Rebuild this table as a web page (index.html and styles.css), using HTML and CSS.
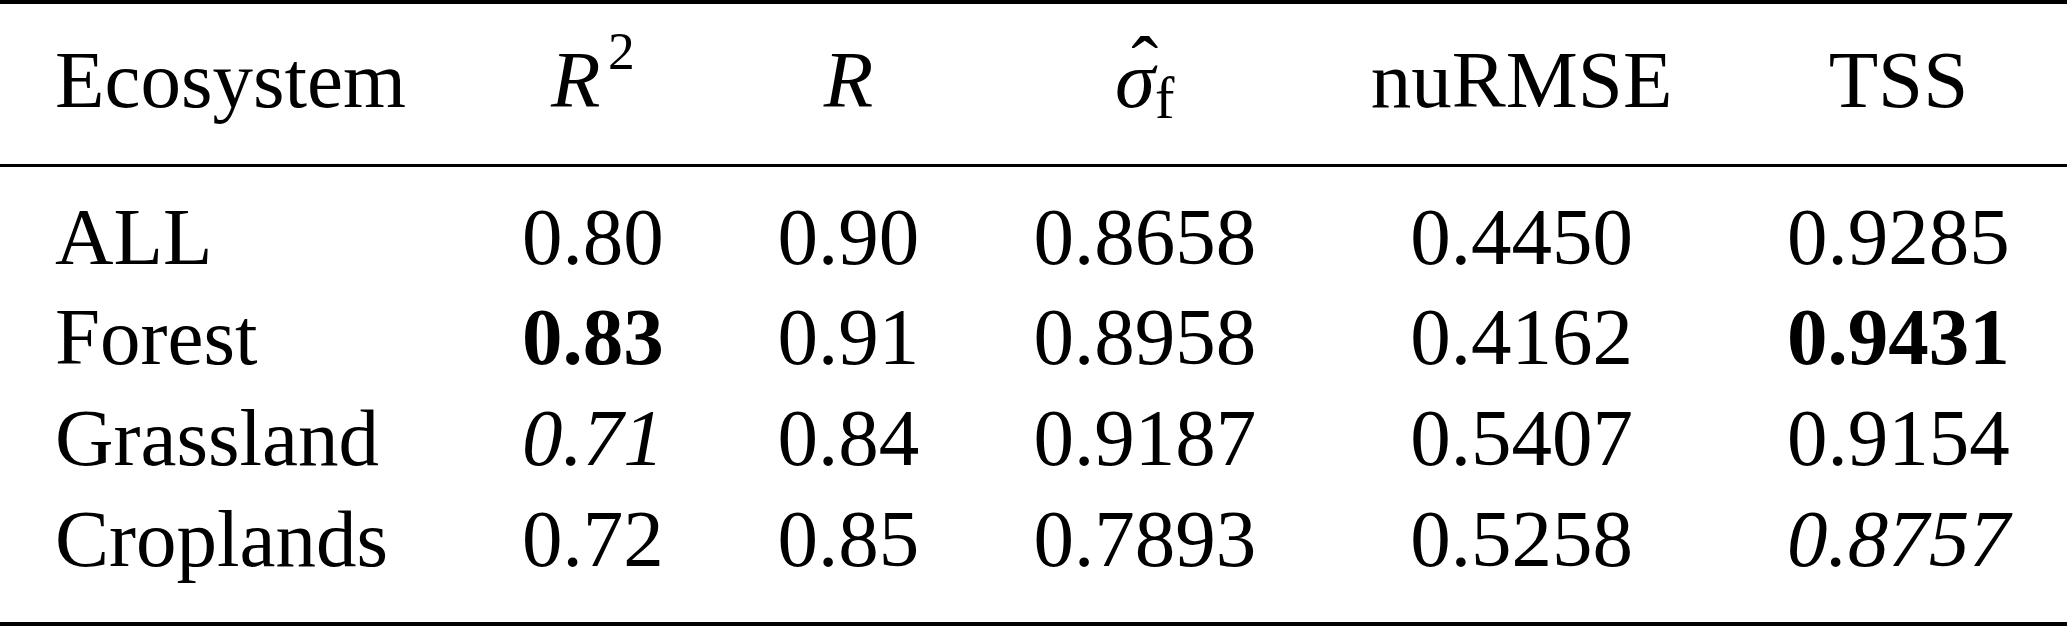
FILE: index.html
```html
<!DOCTYPE html>
<html lang="en">
<head>
    <meta charset="UTF-8">
    <meta name="viewport" content="width=device-width, initial-scale=1.0">
    <title>Ecosystem Results</title>
    <link rel="stylesheet" href="styles.css">
</head>
<body>
<!-- Results per ecosystem -->
<table class="results">
    <thead>
        <tr>
            <th class="name">Ecosystem</th>
            <th><i>R</i><sup>2</sup></th>
            <th><i>R</i></th>
            <th><i class="hat">σ<span class="caret">ˆ</span></i><sub>f</sub></th>
            <th>nuRMSE</th>
            <th>TSS</th>
        </tr>
    </thead>
    <tbody>
        <tr class="first">
            <td class="name">ALL</td>
            <td>0.80</td>
            <td>0.90</td>
            <td>0.8658</td>
            <td>0.4450</td>
            <td>0.9285</td>
        </tr>
        <tr>
            <td class="name">Forest</td>
            <td class="best">0.83</td>
            <td>0.91</td>
            <td>0.8958</td>
            <td>0.4162</td>
            <td class="best">0.9431</td>
        </tr>
        <tr>
            <td class="name">Grassland</td>
            <td class="worst">0.71</td>
            <td>0.84</td>
            <td>0.9187</td>
            <td>0.5407</td>
            <td>0.9154</td>
        </tr>
        <tr class="last">
            <td class="name">Croplands</td>
            <td>0.72</td>
            <td>0.85</td>
            <td>0.7893</td>
            <td>0.5258</td>
            <td class="worst">0.8757</td>
        </tr>
    </tbody>
</table>
</body>
</html>
```

FILE: styles.css
```css
body {
    margin: 0;
    background-color: #fff;
    color: #000;
    font-family: "Liberation Serif", "Times New Roman", serif;
}
.results {
    width: 100%;
    border-collapse: separate;
    border-spacing: 0;
    font-size: 81px;
    line-height: 100.7px;
}
.results th,
.results td {
    padding: 0 56px;
    text-align: center;
    font-weight: normal;
    white-space: nowrap;
}
.results .name {
    text-align: left;
    padding-left: 55px;
}
.results thead th {
    border-top: 4px solid #000;
    border-bottom: 3px solid #000;
    padding-top: 26px;
    padding-bottom: 33px;
}
.results tr.first td {
    padding-top: 20px;
}
.results tr.last td {
    padding-bottom: 32px;
    border-bottom: 4px solid #000;
}
.results sup {
    font-size: 0.66em;
    line-height: 0;
    vertical-align: 0.71em;
    margin-left: 0.14em;
}
.results sub {
    font-size: 0.72em;
    line-height: 0;
    vertical-align: -0.19em;
}
.hat {
    position: relative;
}
.caret {
    position: absolute;
    left: 0.2em;
    top: -10px;
    line-height: 1;
    font-style: normal;
}
.best {
    font-weight: bold !important;
}
.worst {
    font-style: italic;
}
```
